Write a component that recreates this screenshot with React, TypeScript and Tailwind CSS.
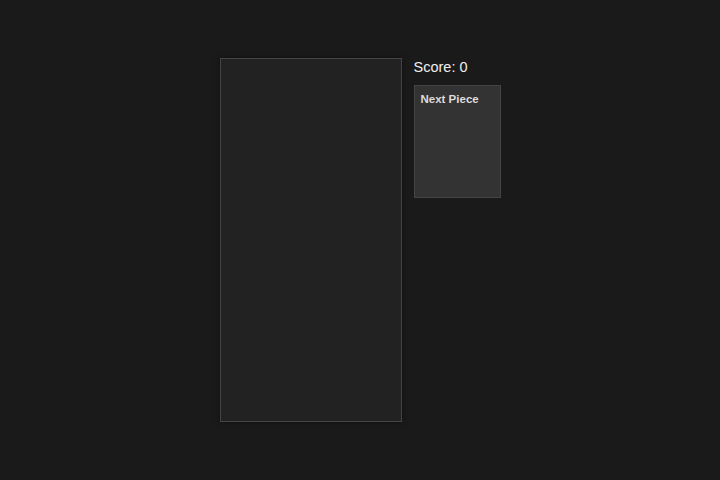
export default function App() {
  return (
    <div
      className="flex h-[480px] w-full items-center justify-center bg-[#1a1a1a]"
      style={{ fontFamily: '"Liberation Sans", Arial, sans-serif' }}
    >
      <div className="flex items-start gap-3">
        {/* Board */}
        <div className="h-[364px] w-[182px] border border-[#444] bg-[#222] shadow-[0_0_6px_rgba(0,0,0,0.4)]" />

        {/* Side panel */}
        <div className="flex flex-col">
          <div className="mb-[9px] pt-px text-[14.5px] leading-[17px] text-[#eee]">Score: 0</div>
          <div className="h-[113px] w-[87px] border border-[#444] bg-[#333] px-[6px] py-[6px]">
            <div className="text-[11.5px] font-bold leading-[14px] text-[#ddd]">Next Piece</div>
          </div>
        </div>
      </div>
    </div>
  );
}
